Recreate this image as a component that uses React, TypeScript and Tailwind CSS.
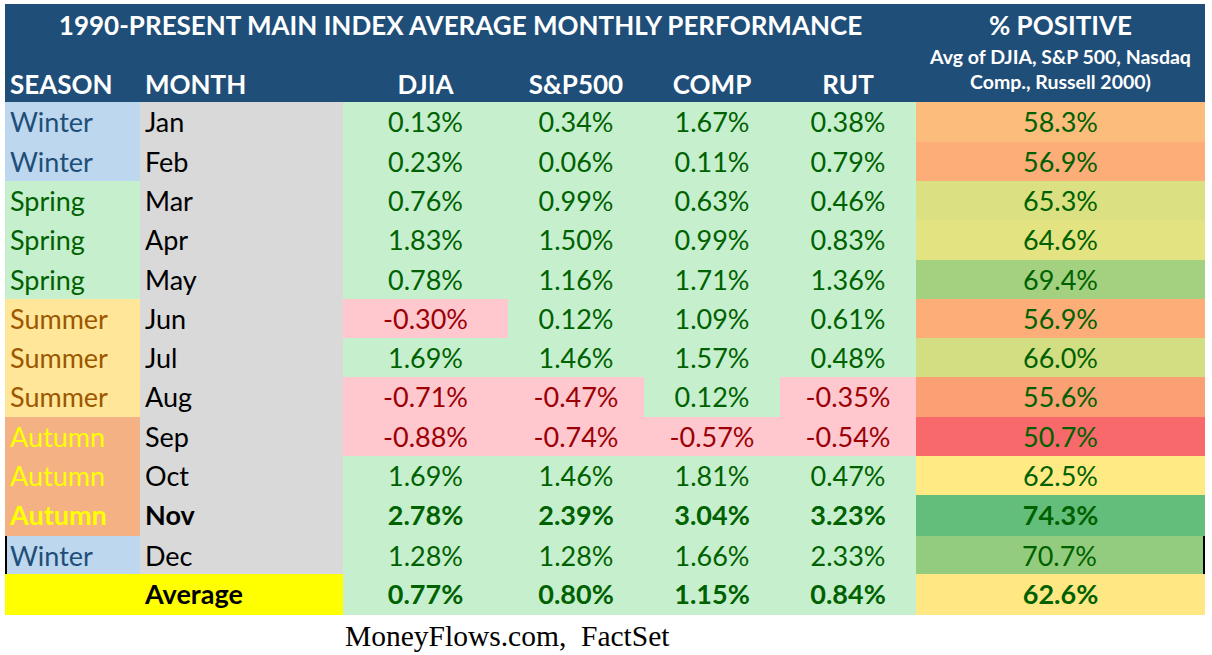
import React from "react";

type Season = "Winter" | "Spring" | "Summer" | "Autumn";

const seasonCls: Record<Season, string> = {
  Winter: "bg-[#bdd7ee] text-[#1f4e79]",
  Spring: "bg-[#c6efce] text-[#006100]",
  Summer: "bg-[#ffe699] text-[#9c5700]",
  Autumn: "bg-[#f4b183] text-[#ffff00]",
};

const ROWS: {
  season: Season;
  month: string;
  vals: string[];
  pos: string;
  posBg: string;
  bold?: boolean;
  tall?: boolean;
}[] = [
  { season: "Winter", month: "Jan", vals: ["0.13%", "0.34%", "1.67%", "0.38%"], pos: "58.3%", posBg: "bg-[#fcbc7b]", tall: true },
  { season: "Winter", month: "Feb", vals: ["0.23%", "0.06%", "0.11%", "0.79%"], pos: "56.9%", posBg: "bg-[#fcad78]" },
  { season: "Spring", month: "Mar", vals: ["0.76%", "0.99%", "0.63%", "0.46%"], pos: "65.3%", posBg: "bg-[#dbe182]" },
  { season: "Spring", month: "Apr", vals: ["1.83%", "1.50%", "0.99%", "0.83%"], pos: "64.6%", posBg: "bg-[#e4e382]", tall: true },
  { season: "Spring", month: "May", vals: ["0.78%", "1.16%", "1.71%", "1.36%"], pos: "69.4%", posBg: "bg-[#a4d17f]" },
  { season: "Summer", month: "Jun", vals: ["-0.30%", "0.12%", "1.09%", "0.61%"], pos: "56.9%", posBg: "bg-[#fcad78]" },
  { season: "Summer", month: "Jul", vals: ["1.69%", "1.46%", "1.57%", "0.48%"], pos: "66.0%", posBg: "bg-[#d2de81]" },
  { season: "Summer", month: "Aug", vals: ["-0.71%", "-0.47%", "0.12%", "-0.35%"], pos: "55.6%", posBg: "bg-[#fb9f75]", tall: true },
  { season: "Autumn", month: "Sep", vals: ["-0.88%", "-0.74%", "-0.57%", "-0.54%"], pos: "50.7%", posBg: "bg-[#f8696b]" },
  { season: "Autumn", month: "Oct", vals: ["1.69%", "1.46%", "1.81%", "0.47%"], pos: "62.5%", posBg: "bg-[#ffea84]" },
  { season: "Autumn", month: "Nov", vals: ["2.78%", "2.39%", "3.04%", "3.23%"], pos: "74.3%", posBg: "bg-[#63be7b]", bold: true },
];

const grid = "grid grid-cols-[135px_203px_165px_136px_136px_136px_289px]";

function ValCell({ v, bold }: { v: string; bold?: boolean }) {
  const neg = v.startsWith("-");
  return (
    <div
      className={`flex items-center justify-center ${neg ? "bg-[#ffc7ce] text-[#9c0006]" : "bg-[#c6efce] text-[#006100]"} ${bold ? "font-bold" : ""}`}
    >
      {v}
    </div>
  );
}

export default function App() {
  return (
    <div className="h-[655px] w-[1212px] bg-white pl-[5px] pt-[4px] font-['Lato',sans-serif]">
      <div className="w-[1200px]">
        {/* header */}
        <div className={`${grid} h-[98px] bg-[#1f4e79] font-bold text-white`}>
          <div className="col-span-6 flex flex-col">
            <div className="flex h-[42px] items-center justify-center text-[26px]">
              1990-PRESENT MAIN INDEX AVERAGE MONTHLY PERFORMANCE
            </div>
            <div className="grid h-[56px] grid-cols-[135px_203px_165px_136px_136px_136px] items-end pb-[2px] text-[26px] leading-[32px]">
              <div className="pl-[5px]">SEASON</div>
              <div className="pl-[5px]">MONTH</div>
              <div className="text-center">DJIA</div>
              <div className="text-center">S&amp;P500</div>
              <div className="text-center">COMP</div>
              <div className="text-center">RUT</div>
            </div>
          </div>
          <div className="flex flex-col items-center">
            <div className="flex h-[42px] items-center text-[26px]">% POSITIVE</div>
            <div className="-mt-[2px] text-center text-[19.5px] leading-[25px]">
              Avg of DJIA, S&amp;P 500, Nasdaq
              <br />
              Comp., Russell 2000)
            </div>
          </div>
        </div>

        {/* body */}
        <div className="text-[27px]">
          {ROWS.map((r) => (
            <div key={r.month} className={`${grid} ${r.tall ? "h-[40px]" : "h-[39px]"}`}>
              <div className={`flex items-center pl-[5px] ${seasonCls[r.season]} ${r.bold ? "font-bold" : ""}`}>
                {r.season}
              </div>
              <div className={`flex items-center bg-[#d9d9d9] pl-[5px] text-black ${r.bold ? "font-bold" : ""}`}>
                {r.month}
              </div>
              {r.vals.map((v, i) => (
                <ValCell key={i} v={v} bold={r.bold} />
              ))}
              <div className={`flex items-center justify-center text-[#006100] ${r.posBg} ${r.bold ? "font-bold" : ""}`}>
                {r.pos}
              </div>
            </div>
          ))}

          {/* Dec – boxed row */}
          <div className="border-2 border-solid border-black">
            <div className="grid h-[36px] grid-cols-[133px_203px_165px_136px_136px_136px_287px]">
              <div className={`flex items-center pl-[3px] ${seasonCls.Winter}`}>Winter</div>
              <div className="flex items-center bg-[#d9d9d9] pl-[5px] text-black">Dec</div>
              {["1.28%", "1.28%", "1.66%", "2.33%"].map((v, i) => (
                <ValCell key={i} v={v} />
              ))}
              <div className="flex items-center justify-center bg-[#93cc7e] text-[#006100]">70.7%</div>
            </div>
          </div>

          <div className={`${grid} h-[40px] border-b-2 border-solid border-[#1a1a1a] font-bold`}>
            <div className="bg-[#ffff00]" />
            <div className="flex items-center bg-[#ffff00] pl-[5px] text-black">Average</div>
            {["0.77%", "0.80%", "1.15%", "0.84%"].map((v, i) => (
              <ValCell key={i} v={v} />
            ))}
            <div className="flex items-center justify-center bg-[#ffe884] text-[#006100]">62.6%</div>
          </div>
        </div>

        <div className="pl-[340px] pt-[5px] font-['Liberation_Serif',serif] text-[29.5px] leading-[34px] text-black">
          MoneyFlows.com,&nbsp; FactSet
        </div>
      </div>
    </div>
  );
}
